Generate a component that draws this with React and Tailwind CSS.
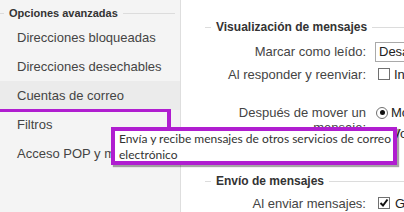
import React from "react";

function Header({ children, leftLine, className = "" }) {
  return (
    <div className={"flex items-center " + className}>
      <div className={"h-px bg-[#dcdcdc] " + leftLine}></div>
      <span className="px-[5px] font-bold whitespace-nowrap">{children}</span>
      <div className="h-px bg-[#dcdcdc] flex-1"></div>
    </div>
  );
}

function Row({ label, children, className = "" }) {
  return (
    <div className={"flex " + className}>
      <div className="w-[185px] shrink-0 text-right text-[13px] text-[#444] leading-[15px]">{label}</div>
      <div className="ml-[9px] flex flex-col whitespace-nowrap text-[13px] text-[#222]">{children}</div>
    </div>
  );
}

export default function App() {
  const items = [
    "Direcciones bloqueadas",
    "Direcciones desechables",
    "Cuentas de correo",
    "Filtros",
    "Acceso POP y mensajes",
  ];
  return (
    <div className="relative w-[404px] h-[212px] overflow-hidden bg-white flex font-['Liberation_Sans',Arial,sans-serif]">
      {/* Sidebar */}
      <div className="w-[181px] shrink-0 h-full bg-[#f4f4f4] border-r border-[#dedede] flex flex-col">
        <Header leftLine="w-[4px]" className="h-[23px] pt-[3px] text-[11px] text-[#333] pr-[5px]">
          Opciones avanzadas
        </Header>
        {items.map((it, i) => (
          <div
            key={it}
            className={
              "h-[29px] flex items-center pl-[17px] text-[13px] text-[#444] whitespace-nowrap " +
              (i === 2 ? "bg-[#ebebeb]" : "")
            }
          >
            {it}
          </div>
        ))}
      </div>

      {/* Main panel */}
      <div className="flex-1 h-full overflow-hidden flex flex-col">
        <Header leftLine="w-[6px] ml-[24px]" className="mt-[19px] h-[16px] leading-[16px] text-[12px] text-[#333] w-[260px] shrink-0">
          Visualización de mensajes
        </Header>
        <Row label={<span className="leading-[20px]">Marcar como leído:</span>} className="mt-[7px] h-[20px] items-center shrink-0">
          <div className="w-[60px] h-[20px] border border-[#a9a9a9] flex items-center pl-[3px] text-[13px]">Desactivado</div>
        </Row>
        <Row label="Al responder y reenviar:" className="mt-[4px] h-[16px] items-center shrink-0">
          <div className="flex items-center">
            <div className="ml-[3px] w-[12px] h-[12px] border border-[#707070] bg-white"></div>
            <span className="ml-[4px] leading-[15px]">Incluir</span>
          </div>
        </Row>
        <Row label={<span>Después de mover un<br />mensaje:</span>} className="mt-[23px] shrink-0">
          <div className="flex items-center h-[15px]">
            <div className="ml-[1px] w-[12px] h-[12px] rounded-full border border-[#707070] bg-white flex items-center justify-center">
              <div className="w-[5px] h-[5px] rounded-full bg-[#111]"></div>
            </div>
            <span className="ml-[3px] leading-[15px]">Mostrar</span>
          </div>
          <div className="flex items-center h-[15px] mt-[6px]">
            <div className="ml-[1px] w-[12px] h-[12px] rounded-full border border-[#707070] bg-white"></div>
            <span className="ml-[4px] leading-[15px]">Volver</span>
          </div>
        </Row>
        <Header leftLine="w-[6px] ml-[24px]" className="mt-[32px] h-[16px] leading-[16px] text-[12px] text-[#333] w-[260px] shrink-0">
          Envío de mensajes
        </Header>
        <Row label="Al enviar mensajes:" className="mt-[6px] h-[16px] items-center shrink-0">
          <div className="flex items-center">
            <div className="ml-[3px] w-[12px] h-[12px] border border-[#707070] bg-white flex items-center justify-center">
              <svg width="10" height="10" viewBox="0 0 10 10">
                <path d="M1.5 5 L4 7.5 L8.5 1.5" stroke="#111" strokeWidth="2" fill="none" />
              </svg>
            </div>
            <span className="ml-[5px] leading-[15px]">Guardar</span>
          </div>
        </Row>
      </div>

      {/* Annotation connector */}
      <div className="absolute left-0 top-[109px] w-[171px] h-[3px] bg-[#b01ed0]"></div>
      <div className="absolute left-[167px] top-[109px] w-[4px] h-[19px] bg-[#b01ed0]"></div>

      {/* Tooltip */}
      <div className="absolute left-[111px] top-[127px] w-[286px] h-[38px] border-4 border-[#b01ed0] bg-white shadow-[2px_2px_1px_rgba(0,0,0,0.35)] pl-[4px] text-[12px] leading-[16px] text-[#333] font-['Lato','Liberation_Sans',sans-serif]">
        Envía y recibe mensajes de otros servicios de correo electrónico
      </div>
    </div>
  );
}
